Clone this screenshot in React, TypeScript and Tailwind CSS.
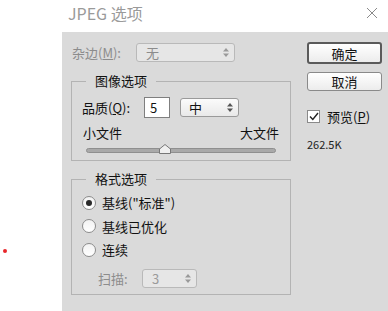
import React from "react";

const FONT = '"Noto Sans CJK SC", "Noto Sans", "Liberation Sans", sans-serif';

function Arrows({ color = "#666" }: { color?: string }) {
  return (
    <svg width="6" height="9" viewBox="0 0 6 9" className="shrink-0">
      <path d="M3 0 L6 3.5 L0 3.5 Z" fill={color} />
      <path d="M3 9 L6 5.5 L0 5.5 Z" fill={color} />
    </svg>
  );
}

function Radio({ checked, label }: { checked?: boolean; label: string }) {
  return (
    <div className="flex items-center h-[23.5px]">
      <div className="w-[14px] h-[14px] rounded-full border border-[#8c8c8c] bg-gradient-to-b from-[#f2f2f2] to-[#ffffff] flex items-center justify-center">
        {checked && <div className="w-[6px] h-[6px] rounded-full bg-[#2a2a2a]" />}
      </div>
      <span className="ml-[6px] text-[13px] text-[#111] leading-none">{label}</span>
    </div>
  );
}

export default function App() {
  return (
    <div className="w-[388px] h-[311px] bg-white overflow-hidden" style={{ fontFamily: FONT }}>
      {/* title bar */}
      <div className="h-[32px] flex items-center justify-between pl-[68px] pr-[10px]">
        <span className="text-[16px] text-[#9a9a9a] leading-none -mt-[6px]">JPEG 选项</span>
        <svg width="12" height="12" viewBox="0 0 12 12" className="-mt-[6px]">
          <path d="M1 1 L11 11 M11 1 L1 11" stroke="#8a8a8a" strokeWidth="1" />
        </svg>
      </div>
      <div className="flex h-[279px]">
        {/* white strip with red dot */}
        <div className="w-[62px] shrink-0 pt-[217px] pl-[3px]">
          <div className="w-[4px] h-[4px] rounded-full bg-[#e8262a]" />
        </div>
        {/* gray panel */}
        <div className="flex-1 bg-[#dadada] flex">
          <div className="w-[245px] shrink-0 pl-[9px] pt-[11px]">
            {/* matte row */}
            <div className="flex items-center h-[19px]">
              <span className="ml-[1px] w-[64px] text-[13px] text-[#8c8c8c] leading-none">
                杂边(<span className="underline">M</span>):
              </span>
              <div className="w-[99px] h-[19px] rounded-[3px] border border-[#b9b9b9] bg-[#e6e6e6] flex items-center justify-between pl-[9px] pr-[5px]">
                <span className="text-[13px] text-[#8c8c8c] leading-none">无</span>
                <Arrows color="#9a9a9a" />
              </div>
            </div>

            {/* image options group */}
            <div className="relative mt-[19px] w-[220px] h-[80px] border border-[#b3b3b3] pl-[10px] pr-[11px] pt-[15px]">
              <span className="absolute left-[14px] -top-[9px] px-[9px] bg-[#dadada] text-[13px] text-[#111] leading-[16px]">图像选项</span>
              <div className="flex items-center h-[21px]">
                <span className="w-[62px] text-[13px] text-[#111] leading-none">
                  品质(<span className="underline">Q</span>):
                </span>
                <div className="w-[26px] h-[21px] border border-[#7f7f7f] bg-white flex items-center pl-[5px] text-[13px] text-[#111] leading-none">5</div>
                <div className="ml-[10px] w-[59px] h-[19px] rounded-[3px] border border-[#9a9a9a] bg-gradient-to-b from-[#fbfbfb] to-[#e9e9e9] flex items-center justify-between pl-[8px] pr-[5px]">
                  <span className="text-[13px] text-[#111] leading-none">中</span>
                  <Arrows color="#555" />
                </div>
              </div>
              <div className="flex justify-between mt-[7px] text-[13px] text-[#111] leading-[16px] pl-[1px]">
                <span>小文件</span>
                <span>大文件</span>
              </div>
              <div className="relative mt-[3px] ml-[4px] w-[190px] h-[9px]">
                <div className="absolute left-0 right-0 top-[4px] h-[5px] rounded-full bg-[#a9a9a9] border border-[#8f8f8f]" />
                <svg width="12" height="10" viewBox="0 0 12 10" className="absolute left-[73px] top-0">
                  <path d="M6 0.5 L11.5 5 L11.5 9.5 L0.5 9.5 L0.5 5 Z" fill="#efefef" stroke="#777" strokeWidth="1" />
                </svg>
              </div>
            </div>

            {/* format options group */}
            <div className="relative mt-[18px] w-[220px] h-[116px] border border-[#b3b3b3] pl-[10px] pt-[11px]">
              <span className="absolute left-[14px] -top-[9px] px-[9px] bg-[#dadada] text-[13px] text-[#111] leading-[16px]">格式选项</span>
              <Radio checked label={'基线("标准")'} />
              <Radio label="基线已优化" />
              <Radio label="连续" />
              <div className="flex items-center mt-[7px] ml-[16px] h-[19px]">
                <span className="w-[44px] text-[13px] text-[#8c8c8c] leading-none">扫描:</span>
                <div className="w-[55px] h-[19px] rounded-[3px] border border-[#b9b9b9] bg-[#e6e6e6] flex items-center justify-between pl-[9px] pr-[5px]">
                  <span className="text-[13px] text-[#9a9a9a] leading-none">3</span>
                  <Arrows color="#9a9a9a" />
                </div>
              </div>
            </div>
          </div>

          {/* right column */}
          <div className="flex flex-col pt-[10px]">
            <button className="w-[75px] h-[22px] rounded-[3px] border-2 border-[#5a5a5a] bg-gradient-to-b from-[#ffffff] to-[#ececec] text-[13px] text-[#111] leading-none flex items-center justify-center">
              确定
            </button>
            <button className="mt-[8px] w-[75px] h-[19px] rounded-[3px] border border-[#8a8a8a] bg-gradient-to-b from-[#ffffff] to-[#ececec] text-[13px] text-[#111] leading-none flex items-center justify-center">
              取消
            </button>
            <div className="mt-[18px] flex items-center h-[14px]">
              <div className="w-[13px] h-[13px] border border-[#8a8a8a] bg-white flex items-center justify-center">
                <svg width="10" height="9" viewBox="0 0 10 9">
                  <path d="M1 4.5 L3.8 7.5 L9 1" stroke="#222" strokeWidth="1.4" fill="none" />
                </svg>
              </div>
              <span className="ml-[7px] text-[13px] text-[#111] leading-none">
                预览(<span className="underline">P</span>)
              </span>
            </div>
            <span className="mt-[14px] text-[11px] text-[#222] leading-[14px]">262.5K</span>
          </div>
        </div>
      </div>
    </div>
  );
}
